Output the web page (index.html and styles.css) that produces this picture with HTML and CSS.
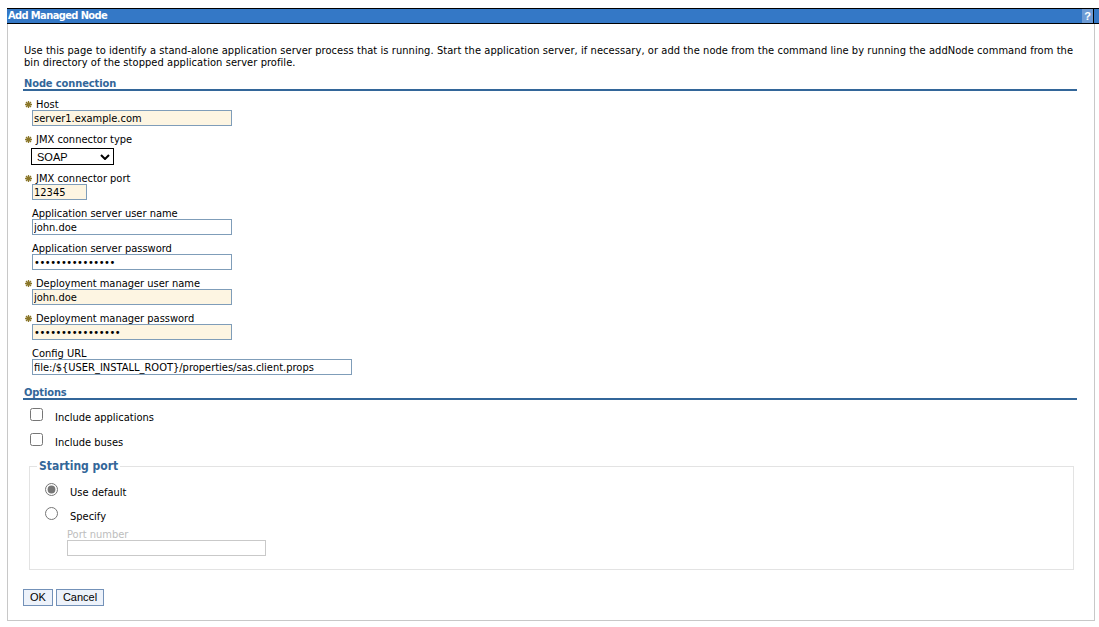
FILE: index.html
```html
<!DOCTYPE html>
<html>
<head>
<meta charset="utf-8">
<title>Add Managed Node</title>
<link rel="stylesheet" href="styles.css">
</head>
<body>
<div class="page">
  <div class="titlebar">
    <span class="title">Add Managed Node</span>
    <span class="help">?</span>
    <span class="tsep"></span>
    <span class="tmore"></span>
  </div>
  <div class="panel">
    <p class="desc">Use this page to identify a stand-alone application server process that is running. Start the application server, if necessary, or add the node from the command line by running the addNode command from the bin directory of the stopped application server profile.</p>

    <h2 class="section">Node connection</h2>
    <div class="fields">
      <div class="field">
        <label class="lbl"><span class="star"><svg width="7" height="7" viewBox="0 0 7 7"><path d="M3.5 0V7M0 3.5H7M1 1L6 6M6 1L1 6" stroke="#8a7628" stroke-width="1.3" fill="none"/></svg></span>Host</label>
        <input class="txt req w200" type="text" value="server1.example.com">
      </div>
      <div class="field">
        <label class="lbl"><span class="star"><svg width="7" height="7" viewBox="0 0 7 7"><path d="M3.5 0V7M0 3.5H7M1 1L6 6M6 1L1 6" stroke="#8a7628" stroke-width="1.3" fill="none"/></svg></span>JMX connector type</label>
        <div class="selwrap">
          <select class="sel"><option>SOAP</option><option>RMI</option></select>
          <svg class="chev" width="10" height="6" viewBox="0 0 10 6"><path d="M1 1L5 5L9 1" stroke="#000" stroke-width="2" fill="none"/></svg>
        </div>
      </div>
      <div class="field">
        <label class="lbl"><span class="star"><svg width="7" height="7" viewBox="0 0 7 7"><path d="M3.5 0V7M0 3.5H7M1 1L6 6M6 1L1 6" stroke="#8a7628" stroke-width="1.3" fill="none"/></svg></span>JMX connector port</label>
        <input class="txt req w55" type="text" value="12345">
      </div>
      <div class="field">
        <label class="lbl">Application server user name</label>
        <input class="txt w200" type="text" value="john.doe">
      </div>
      <div class="field">
        <label class="lbl">Application server password</label>
        <input class="txt pw w200" type="password" value="passwordpasswo1">
      </div>
      <div class="field">
        <label class="lbl"><span class="star"><svg width="7" height="7" viewBox="0 0 7 7"><path d="M3.5 0V7M0 3.5H7M1 1L6 6M6 1L1 6" stroke="#8a7628" stroke-width="1.3" fill="none"/></svg></span>Deployment manager user name</label>
        <input class="txt req w200" type="text" value="john.doe">
      </div>
      <div class="field">
        <label class="lbl"><span class="star"><svg width="7" height="7" viewBox="0 0 7 7"><path d="M3.5 0V7M0 3.5H7M1 1L6 6M6 1L1 6" stroke="#8a7628" stroke-width="1.3" fill="none"/></svg></span>Deployment manager password</label>
        <input class="txt pw req w200" type="password" value="passwordpasswor1">
      </div>
      <div class="field">
        <label class="lbl">Config URL</label>
        <input class="txt w320" type="text" value="file:/${USER_INSTALL_ROOT}/properties/sas.client.props">
      </div>
    </div>

    <h2 class="section opts">Options</h2>
    <div class="opt-row"><input type="checkbox" class="cb"><span class="opt-lbl">Include applications</span></div>
    <div class="opt-row"><input type="checkbox" class="cb"><span class="opt-lbl">Include buses</span></div>

    <fieldset class="fs">
      <legend class="legend">Starting port</legend>
      <div class="radio-row"><input type="radio" name="port" class="rb" checked><span class="opt-lbl">Use default</span></div>
      <div class="radio-row"><input type="radio" name="port" class="rb"><span class="opt-lbl">Specify</span></div>
      <div class="port-block">
        <label class="lbl dis">Port number</label>
        <input class="txt dis-in" type="text" disabled>
      </div>
    </fieldset>

    <div class="buttons">
      <button class="btn">OK</button>
      <button class="btn">Cancel</button>
    </div>
  </div>
</div>
</body>
</html>
```

FILE: styles.css
```css
* { box-sizing: border-box; }
body {
  margin: 0;
  background: #fff;
  font-family: "DejaVu Sans Condensed", "DejaVu Sans", sans-serif;
  font-size: 11px;
  color: #000;
}
.page { padding: 8px 0 0 7px; }

.titlebar {
  display: flex;
  height: 16px;
  border-top: 1px solid #000;
  border-bottom: 1px solid #000;
  background: #3478c6;
}
.title {
  flex: 1;
  color: #fff;
  font-weight: bold;
  line-height: 14px;
  padding-left: 1px;
  letter-spacing: -0.6px;
}
.help {
  width: 11px;
  background: #6d9bd5;
  color: #fff;
  font-family: "Liberation Sans", sans-serif;
  font-weight: bold;
  font-size: 11px;
  text-align: center;
  line-height: 14px;
}
.tsep { width: 1px; background: #000; }
.tmore { width: 5px; background: #3478c6; }

.panel {
  width: 1088px;
  border: 1px solid #c8c8c8;
  border-top: 0;
  padding: 21px 17px 14px 15px;
}
.desc {
  margin: 0;
  line-height: 12px;
  padding-left: 1px;
  letter-spacing: 0.07px;
}
.section {
  margin: 9px 0 0;
  font-size: 11px;
  line-height: 11px;
  font-weight: bold;
  color: #336699;
  border-bottom: 2px solid #336699;
  padding-left: 1px;
  letter-spacing: -0.1px;
}
.section.opts { margin-top: 12px; }

.fields { margin-top: 8px; padding-left: 9px; }
.field { margin-bottom: 8px; }
.lbl { display: block; line-height: 11px; height: 11px; white-space: nowrap; }
.star {
  display: inline-block;
  width: 7px;
  margin-left: -7px;
  margin-right: 4px;
}
.star svg { display: block; position: relative; top: 0; }

.txt {
  display: block;
  height: 16px;
  border: 1px solid #7f9db9;
  padding: 0 1px;
  margin: 0;
  font-family: "DejaVu Sans Condensed", "DejaVu Sans", sans-serif;
  font-size: 11px;
  color: #000;
  background: #fff;
  outline: none;
}
.txt.pw { letter-spacing: -0.45px; }
.txt.req { background: #fdf5e2; }
.w200 { width: 200px; }
.w55 { width: 55px; }
.w320 { width: 320px; }

.selwrap {
  position: relative;
  display: inline-block;
  margin-top: 3px;
  margin-left: -1px;
  vertical-align: top;
}
.sel {
  display: block;
  appearance: none;
  -webkit-appearance: none;
  width: 83px;
  height: 17px;
  border: 1px solid #000;
  border-radius: 0;
  background: #fff;
  padding: 0 0 0 5px;
  margin: 0;
  font-family: "Liberation Sans", Arial, sans-serif;
  font-size: 11px;
  color: #000;
}
.chev { position: absolute; right: 4px; top: 6px; pointer-events: none; }

.opt-row {
  display: flex;
  align-items: flex-start;
  height: 25px;
  padding-left: 7px;
}
.cb {
  width: 13px;
  height: 13px;
  margin: 8px 0 0 0;
}
.opt-lbl {
  margin-left: 12px;
  margin-top: 12px;
  line-height: 11px;
}

.fs {
  margin: 11px 3px 0 6px;
  border: 1px solid #e3e3e3;
  padding: 0 0 13px 7px;
  min-width: 0;
}
.legend {
  padding: 0 2px;
  font-weight: bold;
  font-size: 12px;
  line-height: 11px;
  color: #336699;
}
.radio-row {
  display: flex;
  align-items: flex-start;
  height: 24px;
  padding-left: 8px;
}
.rb {
  width: 13px;
  height: 13px;
  margin: 11px 0 0 0;
  accent-color: #767676;
}
.radio-row .opt-lbl { margin-top: 15px; }
.port-block { margin: 9px 0 0 30px; }
.lbl.dis { color: #bdbdbd; }
.dis-in {
  width: 199px;
  border-color: #c9c9c9;
  background: #fff;
}

.buttons {
  display: flex;
  gap: 3px;
  margin-top: 19px;
}
.btn {
  height: 17px;
  padding: 0 6px;
  margin: 0;
  border: 1px solid #7391b8;
  border-radius: 0;
  background: #edf2fa;
  font-family: "Liberation Sans", Arial, sans-serif;
  font-size: 11px;
  line-height: 15px;
  color: #000;
}
```
